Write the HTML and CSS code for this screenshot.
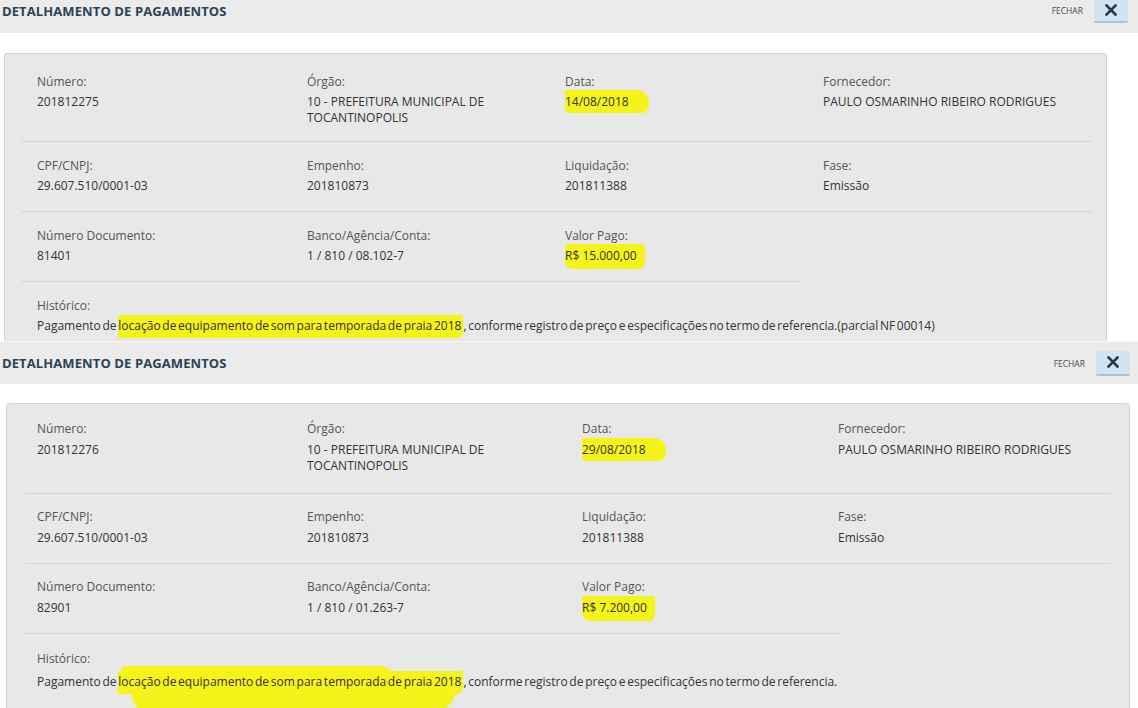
FILE: index.html
```html
<!DOCTYPE html>
<html lang="pt-BR">
<head>
  <meta charset="UTF-8" />
  <title>Detalhamento de Pagamentos</title>
  <link rel="stylesheet" href="styles.css">
</head>
<body>

<!-- Pagamento 201812275 -->
<section class="shot shot-a">
  <header class="modal-head">
    <h2>DETALHAMENTO DE PAGAMENTOS</h2>
    <div class="close-box">
      <span class="close-label">FECHAR</span>
      <button class="close-btn" type="button">
        <svg width="12" height="12" viewBox="0 0 12 12"><path d="M1.5 1.5 L10.5 10.5 M10.5 1.5 L1.5 10.5" stroke="#26394d" stroke-width="2.6" stroke-linecap="square"/></svg>
      </button>
    </div>
  </header>

  <div class="panel">
    <div class="row">
      <div class="cell"><div class="label">Número:</div><div class="value">201812275</div></div>
      <div class="cell"><div class="label">Órgão:</div><div class="value">10 - PREFEITURA MUNICIPAL DE<br>TOCANTINOPOLIS</div></div>
      <div class="cell"><div class="label">Data:</div><div class="value"><span class="hl hl-date">14/08/2018</span></div></div>
      <div class="cell"><div class="label">Fornecedor:</div><div class="value">PAULO OSMARINHO RIBEIRO RODRIGUES</div></div>
    </div>
    <div class="row">
      <div class="cell"><div class="label">CPF/CNPJ:</div><div class="value">29.607.510/0001-03</div></div>
      <div class="cell"><div class="label">Empenho:</div><div class="value">201810873</div></div>
      <div class="cell"><div class="label">Liquidação:</div><div class="value">201811388</div></div>
      <div class="cell"><div class="label">Fase:</div><div class="value">Emissão</div></div>
    </div>
    <div class="row row-partial">
      <div class="cell"><div class="label">Número Documento:</div><div class="value">81401</div></div>
      <div class="cell"><div class="label">Banco/Agência/Conta:</div><div class="value">1 / 810 / 08.102-7</div></div>
      <div class="cell"><div class="label">Valor Pago:</div><div class="value"><span class="hl hl-money">R$ 15.000,00</span></div></div>
    </div>
    <div class="historico">
      <div class="label">Histórico:</div>
      <div class="value">Pagamento de <span class="hl hl-text">locação de equipamento de som para temporada de praia 2018</span>, conforme registro de preço e especificações no termo de referencia.(parcial NF 00014)</div>
    </div>
  </div>
</section>

<!-- Pagamento 201812276 -->
<section class="shot shot-b">
  <header class="modal-head">
    <h2>DETALHAMENTO DE PAGAMENTOS</h2>
    <div class="close-box">
      <span class="close-label">FECHAR</span>
      <button class="close-btn" type="button">
        <svg width="12" height="12" viewBox="0 0 12 12"><path d="M1.5 1.5 L10.5 10.5 M10.5 1.5 L1.5 10.5" stroke="#26394d" stroke-width="2.6" stroke-linecap="square"/></svg>
      </button>
    </div>
  </header>

  <div class="panel">
    <div class="row">
      <div class="cell"><div class="label">Número:</div><div class="value">201812276</div></div>
      <div class="cell"><div class="label">Órgão:</div><div class="value">10 - PREFEITURA MUNICIPAL DE<br>TOCANTINOPOLIS</div></div>
      <div class="cell"><div class="label">Data:</div><div class="value"><span class="hl hl-date">29/08/2018</span></div></div>
      <div class="cell"><div class="label">Fornecedor:</div><div class="value">PAULO OSMARINHO RIBEIRO RODRIGUES</div></div>
    </div>
    <div class="row">
      <div class="cell"><div class="label">CPF/CNPJ:</div><div class="value">29.607.510/0001-03</div></div>
      <div class="cell"><div class="label">Empenho:</div><div class="value">201810873</div></div>
      <div class="cell"><div class="label">Liquidação:</div><div class="value">201811388</div></div>
      <div class="cell"><div class="label">Fase:</div><div class="value">Emissão</div></div>
    </div>
    <div class="row row-partial">
      <div class="cell"><div class="label">Número Documento:</div><div class="value">82901</div></div>
      <div class="cell"><div class="label">Banco/Agência/Conta:</div><div class="value">1 / 810 / 01.263-7</div></div>
      <div class="cell"><div class="label">Valor Pago:</div><div class="value"><span class="hl hl-money">R$ 7.200,00</span></div></div>
    </div>
    <div class="historico">
      <div class="label">Histórico:</div>
      <div class="value">Pagamento de <span class="hl hl-text hl-blob">locação de equipamento de som para temporada de praia 2018</span>, conforme registro de preço e especificações no termo de referencia.</div>
    </div>
  </div>
</section>

</body>
</html>
```

FILE: styles.css
```css
body {
  margin: 0;
  font-family: "Open Sans", "Liberation Sans", sans-serif;
  background: #ffffff;
  color: #333;
}

.shot {
  overflow: hidden;
}

.shot-a {
  height: 341px;
}

.shot-b {
  height: 367px;
  border-top: 1px solid #f7f7f7;
}

/* Modal header */
.modal-head {
  display: flex;
  justify-content: space-between;
  background: #ebebeb;
}

.shot-a .modal-head {
  height: 33px;
  align-items: flex-start;
  padding: 2px 10px 0 2px;
  box-sizing: border-box;
}

.shot-b .modal-head {
  height: 42px;
  align-items: center;
  padding: 0 8px 0 2px;
  box-sizing: border-box;
}

.modal-head h2 {
  margin: 0;
  font-size: 13px;
  font-weight: 700;
  color: #2b4256;
  letter-spacing: 0.1px;
}

.close-box {
  display: flex;
  align-items: center;
  gap: 11px;
}

.shot-a .close-box {
  margin-top: -4px;
}

.close-label {
  font-size: 8.5px;
  color: #4a4a4a;
}

.close-btn {
  width: 34px;
  height: 25px;
  padding: 0;
  border: none;
  border-bottom: 2px solid #a9c3d8;
  border-radius: 2px;
  background: #d2e3f2;
  display: flex;
  align-items: center;
  justify-content: center;
}

/* Detail panel */
.panel {
  background: #e8e8e8;
  border: 1px solid #d3d3d3;
  border-radius: 3px;
  font-size: 12px;
}

.shot-a .panel {
  margin: 20px 31px 0 4px;
  padding: 2px 15px 0 17px;
}

.shot-b .panel {
  margin: 19px 8px 0 6px;
  padding: 0 18px 0 18px;
}

.row {
  display: grid;
  border-bottom: 1px solid #d2d2d2;
}

.shot-a .row {
  grid-template-columns: 270px 258px 258px 1fr;
}

.shot-a .row-partial {
  width: 778px;
}

.shot-b .row {
  grid-template-columns: 270px 275px 256px 1fr;
}

.shot-b .row-partial {
  width: 816px;
}

.cell {
  padding: 15px 12px 17px 15px;
}

.shot-a .row:first-child .cell {
  padding-top: 17px;
  padding-bottom: 15px;
}

.shot-b .cell {
  padding: 14px 12px 17px 12px;
}

.shot-b .row:first-child .cell {
  padding-top: 16px;
  padding-bottom: 19px;
}

.label {
  color: #555;
  line-height: 17px;
  margin-bottom: 4px;
}

.shot-b .label {
  margin-bottom: 5px;
}

.value {
  color: #333;
  line-height: 16px;
}

.historico {
  padding: 15px 15px 20px;
}

.historico .value {
  word-spacing: -1.4px;
}

.shot-b .historico {
  padding: 16px 15px 20px 12px;
}

.shot-b .historico .label {
  margin-bottom: 7px;
}

/* Yellow marker strokes */
.hl {
  position: relative;
  z-index: 0;
  background: #f4f41b;
  padding: 2px 0 3px;
}

.hl-date {
  padding: 3px 20px 3px 0;
  border-radius: 0 12px 8px 4px;
}

.hl-money {
  padding: 3px 8px 5px 0;
  border-radius: 2px 4px 6px 8px;
}

.hl-text {
  padding: 2px 2px 4px 0;
  border-radius: 2px 0 6px 0;
}

.hl-blob::before {
  content: "";
  position: absolute;
  left: 2px;
  right: 70px;
  top: -5px;
  height: 12px;
  background: #f4f41b;
  border-radius: 12px 20px 0 0;
  z-index: -1;
}

.hl-blob::after {
  content: "";
  position: absolute;
  left: 14px;
  right: 8px;
  bottom: -16px;
  height: 20px;
  background: #f4f41b;
  border-radius: 0 0 18px 14px;
  z-index: -1;
}
```
